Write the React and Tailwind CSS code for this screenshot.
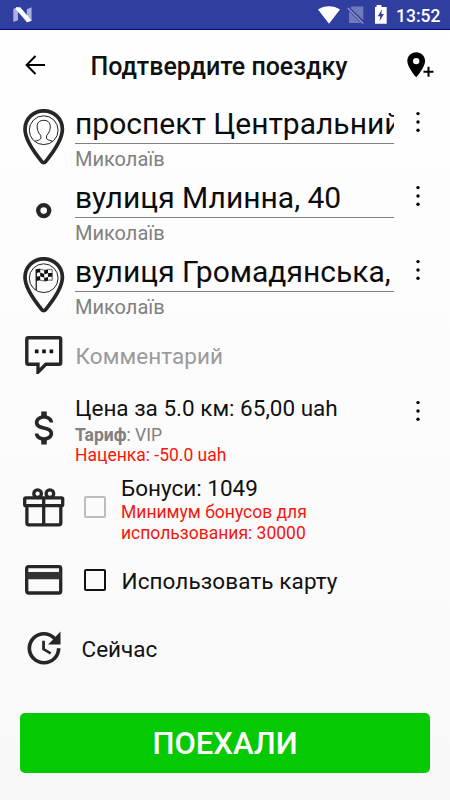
import React from "react";

const INK = "#262626";

function StatusBar() {
  return (
    <div className="flex h-[30px] items-center border-b border-[#0a0a86] bg-[#303f9f] pl-[13px] pr-[10px] text-white">
      <svg width="19" height="16" viewBox="0 0 19 16" className="mt-px">
        <path d="M0.3 2 5 0v13.2L0.3 15z" fill="#aab1dc" />
        <path d="M13.8 2.2 18.6 0.3v13.5l-4.8 1.6z" fill="#aab1dc" />
        <path d="M3 0.3h4.2L18.6 13.6 14 15.3 2.6 2z" fill="#fff" />
      </svg>
      <svg width="70" height="20" viewBox="0 0 70 20" className="ml-auto mt-px">
        <path d="M0 4.6C6 0.1 16 0.1 22 4.6L11 18.8z" fill="#fff" />
        <path d="M33.6 1.6H45.3V15.2L32.4 2.8zM31 6.3 42.8 18H31z" fill="#7079bb" />
        <path d="M29.8 3 45.2 18.6" stroke="#8c94c9" strokeWidth="1.4" />
        <path d="M58.6 0h4.8v2h5.3v16.8H57V2h1.6z" fill="#fff" />
        <path d="M63.9 4.5 59.7 11.3h2.6l-.8 5 4.4-7.2h-2.6z" fill="#303f9f" />
      </svg>
      <span className="ml-[8px] mt-[3px] w-[44px] whitespace-nowrap text-[17.5px] font-medium leading-[20px]">13:52</span>
    </div>
  );
}

function Header() {
  return (
    <header className="flex h-[76px] items-start pl-[25px] pr-[16px] pt-[20px]">
      <svg width="20" height="20" viewBox="0 0 20 20" className="mt-[5px]" fill="none" stroke="#000" strokeWidth="2">
        <path d="M20 10H2M10.5 1 1.6 10l8.9 9" />
      </svg>
      <h1 className="ml-[45.5px] mt-px whitespace-nowrap text-[25px] font-medium leading-[32px] text-[#111]">Подтвердите поездку</h1>
      <svg width="27" height="26" viewBox="0 0 27 26" className="ml-auto mt-[2px]">
        <path
          fillRule="evenodd"
          fill="#000"
          d="M9.2 0.2C4.3 0.2 0.3 4.1 0.3 9c0 6.6 8.9 16.3 8.9 16.3S18.1 15.6 18.1 9C18.1 4.1 14.1 0.2 9.2 0.2zM9.2 5.9a3.2 3.2 0 1 1 0 6.4a3.2 3.2 0 0 1 0-6.4z"
        />
        <path d="M16.5 19.7h10M21.5 14.7v10" stroke="#000" strokeWidth="2" />
      </svg>
    </header>
  );
}

function Dots() {
  return (
    <svg width="6" height="24" viewBox="0 0 6 24">
      <circle cx="3" cy="3.6" r="1.7" />
      <circle cx="3" cy="12" r="1.7" />
      <circle cx="3" cy="20.3" r="1.7" />
    </svg>
  );
}

function Pin({ children }) {
  return (
    <svg width="42" height="56" viewBox="0 0 42 56" fill="none">
      <path
        d="M20.7 1.8C10.3 1.8 2 10 2 20.3c0 10.5 9.6 23.5 16.8 32.3c1 1.3 2.8 1.3 3.8 0C29.8 43.8 39.4 30.8 39.4 20.3C39.4 10 31.1 1.8 20.7 1.8z"
        stroke={INK}
        strokeWidth="3.7"
      />
      <circle cx="20.7" cy="21.2" r="14.4" stroke="#222" strokeWidth="1" />
      {children}
    </svg>
  );
}

function PersonPin() {
  return (
    <Pin>
      <path
        d="M11.8 32.3c2-.8 5-1.2 5.8-2.4c.6-1.1.3-2.8 0-3.6c-2.6-2.6-3.8-6.5-3.4-10c.4-3.4 3-5 6.5-5s6.1 1.6 6.5 5c.4 3.5-.8 7.4-3.4 10c-.3.8-.6 2.5 0 3.6c.8 1.2 3.8 1.6 5.8 2.4"
        stroke="#222"
        strokeWidth="1"
      />
    </Pin>
  );
}

function FlagPin() {
  return (
    <Pin>
      <path d="M13.2 12.2V33" stroke="#111" strokeWidth="1.2" />
      <path d="M13.4 12.6c4-1.6 6 1 9 .6s4-1.4 6.800-.6V23.400c-3-.9-4.500.2-7 .6s-5-2-8.800-.2z" stroke="#222" strokeWidth="0.7" />
      <path
        fill="#111"
        transform="translate(-.2 -.5)"
        d="M13.600 13c1.200-.7 2.400-.7 3.800-.4v3.500c-1.400-.3-2.600-.2-3.800.4zM21.400 13.800c1.400.2 2.500-.2 3.800-.7v3.700c-1.300.5-2.400.8-3.800.6zM17.400 16.100c1.400.4 2.600 1 4 1.300v3.700c-1.400-.3-2.600-1-4-1.300zM25.200 16.800c1.400-.4 2.700-.5 4.200-.2v3.700c-1.500-.3-2.800-.1-4.200.3zM13.600 20.300c1.200-.6 2.400-.7 3.800-.5v3.800c-1.400-.2-2.600.1-3.800.8zM21.400 21.100c1.400.1 2.500-.1 3.800-.5v3.500c-1.300.4-2.400.6-3.800.4z"
      />
    </Pin>
  );
}

function Stop() {
  return (
    <svg width="42" height="56" viewBox="0 0 42 56" fill="none">
      <circle cx="20.7" cy="27.6" r="5.5" stroke={INK} strokeWidth="4.4" />
    </svg>
  );
}

function Address({ icon, street, city }) {
  return (
    <div className="flex h-[74px] pl-[23px]">
      <div className="w-[52px] shrink-0 pt-[3px]">{icon}</div>
      <div className="w-[319px] shrink-0">
        <div className="h-[38px] overflow-hidden whitespace-nowrap border-b border-[#808080] text-[30px] leading-[35px] text-[#0c0c0c]">
          {street}
        </div>
        <div className="text-[20px] leading-[31px] text-[#808080]">{city}</div>
      </div>
      <div className="ml-[21px] pt-[4px]">
        <Dots />
      </div>
    </div>
  );
}

function Checkbox({ className }) {
  return <div className={"h-[22px] w-[22px] shrink-0 rounded-[2px] border-2 " + className} />;
}

export default function App() {
  return (
    <div
      className="flex h-[800px] w-[450px] flex-col overflow-hidden bg-linear-to-b from-white to-[#f8f8f8]"
      style={{ fontFamily: 'Roboto, "Liberation Sans", sans-serif' }}
    >
      <StatusBar />
      <Header />
      <Address icon={<PersonPin />} street="проспект Центральний" city="Миколаїв" />
      <Address icon={<Stop />} street="вулиця Млинна, 40" city="Миколаїв" />
      <Address icon={<FlagPin />} street="вулиця Громадянська," city="Миколаїв" />

      <div className="flex h-[64px] items-start pl-[25px] pt-[8px]">
        <svg width="38" height="38" viewBox="0 0 38 38" fill="none">
          <path
            d="M3.3 1.7H34.2a1.5 1.5 0 0 1 1.5 1.5V26.800a1.500 1.500 0 0 1-1.500 1.500H20.800L13 36.200V28.300H3.300a1.500 1.500 0 0 1-1.500-1.500V3.200a1.500 1.500 0 0 1 1.500-1.500z"
            stroke={INK}
            strokeWidth="3.4"
          />
          <path d="M9.900 13.500h3.600v3.700H9.900zM17.200 13.500h3.600v3.700h-3.600zM24.600 13.500h3.600v3.700h-3.600z" fill="#111" />
        </svg>
        <div className="ml-[12.500px] mt-[4px] text-[22.5px] leading-[32px] tracking-[0.07px] text-[#9a9a9a]">Комментарий</div>
      </div>

      <div className="flex h-[82px] items-start pl-[22px]">
        <svg width="44" height="44" viewBox="0 0 24 24" className="mt-[14px] shrink-0" fill={INK}>
          <path d="M7,15H9C9,16.08 10.37,17 12,17C13.63,17 15,16.08 15,15C15,13.9 13.96,13.5 11.76,12.97C9.64,12.44 7,11.78 7,9C7,7.21 8.47,5.69 10.5,5.18V3H13.5V5.18C15.53,5.69 17,7.21 17,9H15C15,7.92 13.63,7 12,7C10.37,7 9,7.92 9,9C9,10.1 10.04,10.5 12.24,11.03C14.36,11.56 17,12.22 17,15C17,16.79 15.53,18.31 13.5,18.82V21H10.5V18.82C8.47,18.31 7,16.79 7,15Z" />
        </svg>
        <div className="ml-[9px] w-[340px] shrink-0">
          <div className="text-[22.5px] leading-[32px] text-[#111]">Цена за 5.0 км: 65,00 uah</div>
          <div className="pt-px text-[17.5px] leading-[20px] text-[#808080]">
            <b className="font-bold">Тариф</b>: VIP
          </div>
          <div className="text-[17.5px] leading-[21px] text-[#f5160c]">Наценка: -50.0 uah</div>
        </div>
        <div className="pt-[7px]">
          <Dots />
        </div>
      </div>

      <div className="flex h-[76px] items-start pl-[23px] pt-[2px]">
        <svg width="42" height="40" viewBox="0 0 42 40" className="mt-[12px] shrink-0" fill="none" stroke={INK} strokeWidth="3.3">
          <circle cx="14.6" cy="5.7" r="3.8" />
          <circle cx="26.9" cy="5.7" r="3.8" />
          <rect x="1.7" y="9.9" width="38" height="7.7" rx="1.2" />
          <path d="M3.9 17.6V35a1.8 1.8 0 0 0 1.8 1.8H36a1.800 1.800 0 0 0 1.800-1.800V17.600M20.700 9V37" />
        </svg>
        <Checkbox className="ml-[19px] mt-[20px] border-[#bdbdbd]" />
        <div className="ml-[15px]">
          <div className="text-[22.5px] leading-[24px] text-[#111]">Бонуси: 1049</div>
          <div className="pt-[2px] text-[17.5px] leading-[21px] text-[#f5160c]">
            Минимум бонусов для
            <br />
            использования: 30000
          </div>
        </div>
      </div>

      <div className="flex h-[60px] items-center pl-[25px]">
        <svg width="38" height="30" viewBox="0 0 38 30">
          <rect x="1.7" y="1.7" width="34" height="26.3" rx="1.8" fill="none" stroke={INK} strokeWidth="3.3" />
          <path d="M2 7h34v7.3H2z" fill="#333" />
        </svg>
        <Checkbox className="ml-[21px] border-[#111]" />
        <div className="ml-[15.5px] mt-px text-[22.5px] leading-[32px] tracking-[0.1px] text-[#111]">Использовать карту</div>
      </div>

      <div className="flex h-[103px] items-start pl-[22px] pt-[16px]">
        <svg width="44" height="44" viewBox="0 0 24 24" fill={INK}>
          <path d="M21,10.12H14.22L16.96,7.3C14.23,4.6 9.81,4.5 7.08,7.2C4.35,9.91 4.35,14.28 7.08,17C9.81,19.7 14.23,19.7 16.96,17C18.32,15.65 19,14.08 19,12.1H21C21,14.08 20.12,16.65 18.36,18.39C14.85,21.87 9.15,21.87 5.64,18.39C2.14,14.92 2.11,9.28 5.62,5.81C9.13,2.34 14.76,2.34 18.27,5.81L21,3V10.12M12.5,8V12.25L16,14.33L15.28,15.54L11,13V8H12.5Z" />
        </svg>
        <div className="ml-[15.5px] mt-[7px] text-[22.5px] leading-[32px] text-[#111]">Сейчас</div>
      </div>

      <button className="mx-5 flex h-[60px] shrink-0 items-center justify-center rounded-[5px] bg-[#05c903] pt-[2px] text-[31px] font-medium text-white">
        ПОЕХАЛИ
      </button>
    </div>
  );
}
